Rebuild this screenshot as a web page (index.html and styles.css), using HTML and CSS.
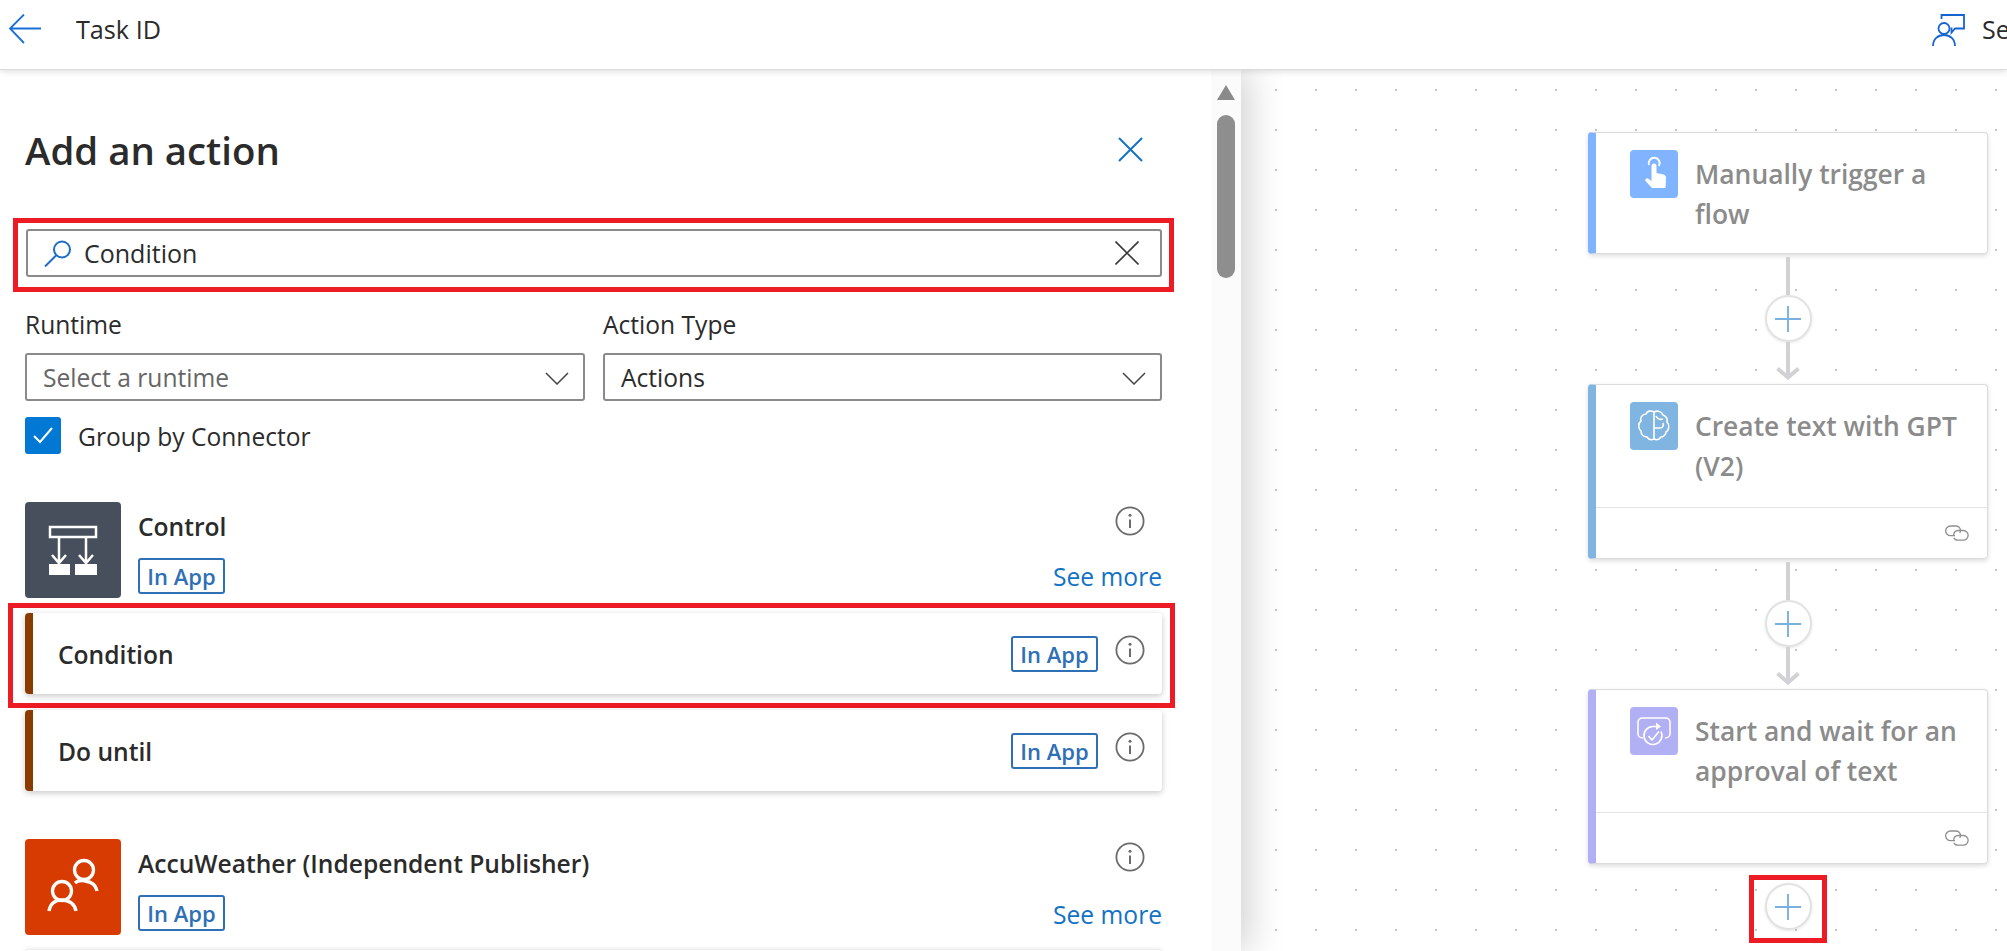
FILE: index.html
```html
<!DOCTYPE html>
<html lang="en">
<head>
<meta charset="utf-8">
<title>Task ID</title>
<link rel="stylesheet" href="styles.css">
</head>
<body>
<svg class="sprite" aria-hidden="true">
  <symbol id="info" viewBox="0 0 30 30"><circle cx="15" cy="15" r="13.6" fill="none" stroke="#6b6b6b" stroke-width="1.8"/><path d="M15 13.5V22" fill="none" stroke="#6b6b6b" stroke-width="2"/><circle cx="15" cy="9.3" r="1.5" fill="#6b6b6b"/></symbol>
  <symbol id="link" viewBox="0 0 24 16"><path d="M10 10.700H5.500a4.800 4.800 0 0 1 0-9.700H10.500c3 0 5 2 5 4.500 0 1-.3 1.700-.8 2.300M8.800 10.800c-.5-3 1.500-5.300 4.200-5.300h5.300a4.800 4.800 0 0 1 0 9.700H13c-2 0-3.500-1-4.200-2.500" fill="none" stroke="#8f8f8f" stroke-width="1.300"/></symbol>
  <symbol id="chev" viewBox="0 0 24 13"><path d="M1 1l11 11L23 1" fill="none" stroke="#444" stroke-width="1.5"/></symbol>
  <symbol id="plus" viewBox="0 0 30 30"><path d="M15 1v28M1 15h28" fill="none" stroke="#78b0e0" stroke-width="2"/></symbol>
</svg>

<header class="topbar">
  <svg class="back" viewBox="0 0 32 30"><path d="M32 14.500H1M15 .5L1 14.500l14 14.500" fill="none" stroke="#1a6fd4" stroke-width="1.800"/></svg>
  <span class="topbar-title">Task ID</span>
  <svg class="feedback" viewBox="0 0 33 32"><g fill="none" stroke="#1464d2" stroke-width="1.800"><circle cx="12" cy="14.500" r="5.500"/><path d="M1 32c0-7 5-11 11-11s11 4 11 11M9.500 5V1H32v13.500H23l-3.500 4v-5"/></g></svg>
  <span class="topbar-action">Se</span>
</header>

<main class="workspace">
  <section class="panel">
    <div class="panel-body">
      <div class="panel-head">
        <h1 class="panel-title">Add an action</h1>
        <svg class="panel-close" viewBox="0 0 25 25"><path d="M1 1l23 23M24 1L1 24" fill="none" stroke="#1272c4" stroke-width="2"/></svg>
      </div>

      <div class="callout callout-search">
        <div class="search">
          <svg class="search-icon" viewBox="0 0 27 27"><circle cx="18" cy="9.500" r="8" fill="none" stroke="#1b6ec2" stroke-width="2"/><path d="M12 15.500L1 26.500" stroke="#1b6ec2" stroke-width="2"/></svg>
          <span class="search-text">Condition</span>
          <svg class="search-clear" viewBox="0 0 24 24"><path d="M.5.5l23 23M23.500.5l-23 23" fill="none" stroke="#3a3a3a" stroke-width="1.600"/></svg>
        </div>
      </div>

      <div class="filters">
        <div class="filter">
          <label class="filter-label">Runtime</label>
          <div class="select"><span class="placeholder">Select a runtime</span><svg class="chevron"><use href="#chev"/></svg></div>
        </div>
        <div class="filter">
          <label class="filter-label">Action Type</label>
          <div class="select"><span>Actions</span><svg class="chevron"><use href="#chev"/></svg></div>
        </div>
      </div>

      <div class="group-toggle">
        <span class="checkbox"><svg viewBox="0 0 36 36"><path d="M9 19l6 6L27 11" fill="none" stroke="#fff" stroke-width="2"/></svg></span>
        <span class="group-label">Group by Connector</span>
      </div>

      <div class="connector connector-control">
        <div class="connector-logo logo-control">
          <svg viewBox="0 0 96 96"><g fill="none" stroke="#fff" stroke-width="2.500"><rect x="25" y="25" width="46" height="10"/><path d="M34 35v26M61 35v26M27 53l7 8 7-8M54 53l7 8 7-8"/></g><path d="M24 62h21v11H24zM50 62h22v11H50z" fill="#fff"/></svg>
        </div>
        <div class="connector-main">
          <div class="connector-name">Control</div>
          <span class="badge">In App</span>
        </div>
        <div class="connector-side">
          <svg class="info"><use href="#info"/></svg>
          <a class="see-more">See more</a>
        </div>
      </div>

      <div class="callout callout-row">
        <div class="action-row">
          <span class="action-name">Condition</span>
          <span class="badge">In App</span>
          <svg class="info info-row"><use href="#info"/></svg>
        </div>
      </div>

      <div class="action-row action-row-plain">
        <span class="action-name">Do until</span>
        <span class="badge">In App</span>
        <svg class="info info-row"><use href="#info"/></svg>
      </div>

      <div class="connector connector-accu">
        <div class="connector-logo logo-accu">
          <svg viewBox="0 0 96 96"><g fill="none" stroke="#fff" stroke-width="3.300"><circle cx="59" cy="31" r="9.500"/><path d="M50 44c3-3 6-3 10-2 7 1 11 4 12 10"/><circle cx="37" cy="52" r="9.500"/><path d="M24 72c1-7 6-11 13-11s13 4 14 11"/></g></svg>
        </div>
        <div class="connector-main">
          <div class="connector-name">AccuWeather (Independent Publisher)</div>
          <span class="badge">In App</span>
        </div>
        <div class="connector-side connector-side-accu">
          <svg class="info"><use href="#info"/></svg>
          <a class="see-more">See more</a>
        </div>
      </div>

      <div class="next-card"></div>
    </div>

    <div class="scrollbar">
      <span class="scroll-up"></span>
      <span class="scroll-thumb"></span>
    </div>
  </section>

  <section class="canvas">
    <div class="flow">
      <article class="node node-trigger">
        <div class="node-body node-body-plain">
          <span class="node-icon icon-trigger">
            <svg viewBox="0 0 48 48"><path d="M19 15a5.500 5.500 0 1 1 10 1" fill="none" stroke="#fff" stroke-width="2"/><path d="M21.500 16a2.500 2.500 0 0 1 5 0v7l7 1.500c1.500.5 2.500 1.500 2.500 3l-.5 10.500H22l-6.500-7c-1-1.500 1-3.500 2.500-2.500l3.500 2.500z" fill="#fff"/></svg>
          </span>
          <h2 class="node-title">Manually trigger a flow</h2>
        </div>
      </article>

      <div class="link-gap">
        <span class="wire wire-top"></span>
        <span class="add"><svg class="add-plus"><use href="#plus"/></svg></span>
        <span class="wire wire-bottom"></span>
        <svg class="arrowhead" viewBox="0 0 24 13"><path d="M1.500 1.500L12 10.500 22.500 1.500" fill="none" stroke="#d2d2d6" stroke-width="4"/></svg>
      </div>

      <article class="node node-gpt">
        <div class="node-body">
          <span class="node-icon icon-gpt">
            <svg viewBox="0 0 48 48"><g fill="none" stroke="#fff" stroke-width="1.600"><path d="M24 10C21 8 17 9 16 12 12 12 10 16 11 19 8 21 8 27 11 29 11 33 14 35 17 35 19 38 22 38 24 37Z"/><path d="M24 10C28 8 32 10 33 13 36 14 38 17 37 20 40 23 39 28 36 30 36 33 33 35 31 35 29 38 26 38 24 37M24 26H30C33 26 34 23 33 21M26 14C27 17 30 18 33 17"/></g></svg>
          </span>
          <h2 class="node-title">Create text with GPT (V2)</h2>
        </div>
        <div class="node-foot"><svg class="link-icon"><use href="#link"/></svg></div>
      </article>

      <div class="link-gap">
        <span class="wire wire-top"></span>
        <span class="add"><svg class="add-plus"><use href="#plus"/></svg></span>
        <span class="wire wire-bottom"></span>
        <svg class="arrowhead" viewBox="0 0 24 13"><path d="M1.500 1.500L12 10.500 22.500 1.500" fill="none" stroke="#d2d2d6" stroke-width="4"/></svg>
      </div>

      <article class="node node-approval">
        <div class="node-body">
          <span class="node-icon icon-approval">
            <svg viewBox="0 0 48 48"><g fill="none" stroke="#fff" stroke-width="1.600"><path d="M13 31c-3 0-5-2-5-4V15c0-2 2-4 4-4h24c2 0 4 2 4 4v12c0 2-2 4-5 4"/><path d="M31 24.500a9 9 0 1 1-8-5h3"/><path d="M18.500 29l3.500 4 7-8.500"/></g><path d="M26 15.500l5 4-5 3.500z" fill="#fff"/></svg>
          </span>
          <h2 class="node-title">Start and wait for an approval of text</h2>
        </div>
        <div class="node-foot"><svg class="link-icon"><use href="#link"/></svg></div>
      </article>

      <div class="callout callout-add">
        <span class="add add-last"><svg class="add-plus"><use href="#plus"/></svg></span>
      </div>
    </div>
  </section>
</main>
</body>
</html>
```

FILE: styles.css
```css
* { box-sizing: border-box; }

html, body { margin: 0; height: 100%; }

body {
  width: 2007px;
  height: 951px;
  overflow: hidden;
  display: flex;
  flex-direction: column;
  background: #fff;
  color: #2b2b2b;
  font-family: "Open Sans", "Noto Sans", sans-serif;
  font-size: 24.600px;
}

.sprite { display: none; }

.topbar {
  position: relative;
  z-index: 3;
  flex: 0 0 70px;
  display: flex;
  align-items: center;
  padding-left: 9px;
  background: #fff;
  border-bottom: 1px solid #dcdcdc;
  box-shadow: 0 2px 6px rgba(0, 0, 0, .12);
  overflow: hidden;
}

.back { width: 32px; height: 30px; margin-bottom: 11px; }

.topbar-title { margin-left: 35px; margin-bottom: 11px; font-size: 25.200px; }

.feedback { width: 33px; height: 32px; margin-left: auto; margin-bottom: 10px; }

.topbar-action { width: 25px; margin-left: 17px; margin-bottom: 11px; font-size: 25px; white-space: nowrap; }

.workspace { flex: 1; display: flex; min-height: 0; }

.panel {
  position: relative;
  z-index: 2;
  flex: 0 0 1241px;
  display: flex;
  background: #fff;
  box-shadow: 8px 0 34px rgba(0, 0, 0, .18);
}

.panel-body { flex: 0 0 1211px; padding: 58px 49px 0 25px; overflow: hidden; }

.panel-head { display: flex; align-items: center; justify-content: space-between; height: 48px; padding-right: 19px; }

.panel-title { margin: 0 0 4px; font-size: 38.400px; line-height: 48px; font-weight: 600; }

.panel-close { width: 25px; height: 25px; margin-bottom: 6px; }

.callout { border: 5px solid #ed1c24; }

.callout-search { margin: 42px -12px 0 -12px; padding: 6px 7px 10px 8px; height: 74px; }

.search {
  display: flex;
  align-items: center;
  height: 48px;
  padding: 0 21px 0 16px;
  border: 2px solid #8a8a8a;
  border-radius: 3px;
}

.search-icon { width: 27px; height: 27px; }

.search-text { margin-left: 13px; flex: 1; font-size: 25px; }

.search-clear { width: 24px; height: 24px; }

.filters { display: grid; grid-template-columns: 560px 559px; column-gap: 18px; margin-top: 19px; }

.filter-label { display: block; height: 28px; margin-bottom: 14px; line-height: 28px; }

.select {
  display: flex;
  align-items: center;
  justify-content: space-between;
  height: 48px;
  padding: 0 14px 0 16px;
  border: 2px solid #8a8a8a;
  border-radius: 3px;
}

.placeholder { color: #666; }

.chevron { width: 24px; height: 13px; margin-top: 2px; }

.group-toggle { display: flex; align-items: center; gap: 17px; height: 37px; margin-top: 16px; }

.group-label { padding-top: 2px; }

.checkbox { width: 36px; height: 37px; background: #0078d4; border-radius: 3px; }

.checkbox svg { display: block; width: 36px; height: 36px; }

.connector { display: flex; height: 96px; gap: 17px; }

.connector-control { margin-top: 48px; }

.connector-accu { margin-top: 48px; }

.connector-logo { flex: 0 0 96px; height: 96px; border-radius: 4px; }

.connector-logo svg { display: block; width: 96px; height: 96px; }

.logo-control { background: #464f5b; }

.logo-accu { background: #d83b01; }

.connector-main { flex: 1; padding-top: 8px; }

.connector-name { height: 34px; line-height: 34px; font-weight: 600; }

.connector-main .badge { margin-top: 14px; }

.badge {
  display: inline-flex;
  align-items: center;
  justify-content: center;
  width: 87px;
  height: 36px;
  border: 2px solid #2f6fb5;
  border-radius: 3px;
  color: #2f6fb5;
  font-size: 22px;
  font-weight: 600;
}

.connector-side { display: flex; flex-direction: column; align-items: flex-end; padding-top: 4px; }

.connector-side-accu { padding-top: 3px; }

.connector-side-accu .see-more { margin-top: 29px; }

.info { display: block; width: 30px; height: 30px; margin-right: 17px; }

.see-more { margin-top: 27px; height: 28px; line-height: 28px; color: #1272c4; }

.callout-row { margin: 5px -13px 0 -17px; padding: 5px 8px 9px 12px; height: 105px; }

.action-row {
  display: flex;
  align-items: center;
  gap: 17px;
  height: 81px;
  padding-left: 25px;
  background: #fff;
  border-left: 8px solid #8a3c00;
  border-radius: 4px;
  box-shadow: 0 2px 6px rgba(0, 0, 0, .22);
}

.action-row-plain { margin-top: 2px; }

.action-name { flex: 1; padding-top: 2px; font-weight: 600; }

.info-row { margin-bottom: 8px; }

.next-card { height: 40px; margin-top: 15px; border-radius: 4px; box-shadow: 0 -1px 4px rgba(0, 0, 0, .12); }

.scrollbar {
  flex: 0 0 30px;
  display: flex;
  flex-direction: column;
  align-items: center;
  padding-top: 15px;
  background: #fbfbfb;
}

.scroll-up {
  width: 18px;
  height: 15px;
  background: #8a8a8a;
  clip-path: polygon(50% 0, 100% 100%, 0 100%);
}

.scroll-thumb { width: 18px; height: 163px; margin-top: 15px; background: #8e8e8e; border-radius: 9px; }

.canvas {
  flex: 1;
  min-width: 0;
  background-color: #fff;
  background-image: radial-gradient(circle at center, #c6c6c6 0, #c6c6c6 1px, transparent 1.6px);
  background-size: 40px 40px;
  background-position: 15px 0;
  overflow: hidden;
}

.flow { display: flex; flex-direction: column; align-items: center; width: 400px; margin-left: 347px; padding-top: 62px; }

.node {
  width: 400px;
  background: #fff;
  border: 1px solid #dcdcdc;
  border-left: 8px solid;
  border-radius: 4px;
  box-shadow: 0 2px 5px rgba(0, 0, 0, .14);
  color: #8b8b8b;
}

.node-trigger { border-left-color: #7fb2ff; }

.node-gpt { border-left-color: #7fb5e0; }

.node-approval { border-left-color: #b2b0f5; }

.node-body { display: flex; gap: 17px; height: 123px; padding: 17px 10px 0 34px; border-bottom: 1px solid #e4e4e4; }

.node-body-plain { height: 120px; border-bottom: 0; }

.node-icon { flex: 0 0 48px; height: 48px; border-radius: 4px; }

.node-icon svg { display: block; width: 48px; height: 48px; }

.icon-trigger { background: #80b4ff; }

.icon-gpt { background: #7fb5e0; }

.icon-approval { background: #b2b0f5; }

.node-title { margin: 4px 0 0; font-size: 26.400px; line-height: 40px; font-weight: 600; }

.node-foot { display: flex; align-items: center; justify-content: flex-end; height: 50px; padding-right: 18px; }

.link-icon { width: 24px; height: 16px; }

.link-gap { display: flex; flex-direction: column; align-items: center; height: 130px; padding-top: 3px; }

.wire { flex: none; width: 4px; background: #d2d2d6; }

.wire-top { height: 38px; }

.wire-bottom { height: 36px; }

.arrowhead { flex: none; width: 24px; height: 13px; margin-top: -11px; }

.add {
  flex: none;
  display: flex;
  align-items: center;
  justify-content: center;
  width: 47px;
  height: 47px;
  background: #fff;
  border: 2px solid #e2e2e2;
  border-radius: 50%;
  box-shadow: 0 1px 3px rgba(0, 0, 0, .1);
}

.add-plus { width: 28px; height: 28px; }

.callout-add {
  display: flex;
  justify-content: center;
  width: 78px;
  height: 68px;
  margin-top: 11px;
  padding-top: 3px;
}
```
